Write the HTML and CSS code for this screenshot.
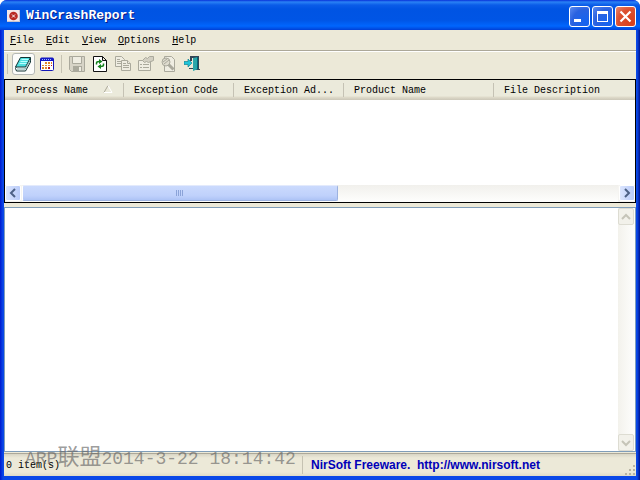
FILE: index.html
```
<!DOCTYPE html>
<html lang="en">
<head>
<meta charset="utf-8">
<title>WinCrashReport</title>
<link rel="stylesheet" href="styles.css">
</head>
<body>
<div class="window">
  <header class="titlebar">
    <svg class="app-icon" width="13" height="12" viewBox="0 0 13 12"><path fill="#f4e8e8" d="M0 0h13v12H0z"/><path fill="#c8c4d0" d="M0 11h13v1H0zM12 0h1v12h-1z"/><circle cx="6.500" cy="6" r="4.300" fill="#b82a24"/><path d="M5 4.500l3 3M8 4.500l-3 3" stroke="#fff"/></svg>
    <h1 class="title">WinCrashReport</h1>
    <div class="caption">
      <button class="cap" aria-label="Minimize"><svg width="19" height="19" viewBox="0 0 19 19"><path fill="#fff" d="M4 12h7v3H4z"/></svg></button>
      <button class="cap" aria-label="Maximize"><svg width="19" height="19" viewBox="0 0 19 19"><path fill="#fff" fill-rule="evenodd" d="M4 4h11v11H4zM5 7v7h9V7z"/></svg></button>
      <button class="cap cap-close" aria-label="Close"><svg width="19" height="19" viewBox="0 0 19 19"><path stroke="#fff" stroke-width="2.200" d="M4.500 4.500l10 10M14.500 4.500l-10 10"/></svg></button>
    </div>
  </header>
  <div class="client">
    <nav class="menu">
      <button><u>F</u>ile</button><button><u>E</u>dit</button><button><u>V</u>iew</button><button><u>O</u>ptions</button><button><u>H</u>elp</button>
    </nav>
    <div class="toolbar">
      <span class="grip"></span>
      <button class="tool active" aria-label="Lower pane"><svg width="17" height="16" viewBox="0 0 17 16"><path fill="#fff" stroke="#133" d="M1.500 10.500l-1 2 1 2.500h9l5-9V2z"/><path fill="#4fdfe0" stroke="#133" d="M5.500 1.500h10l-5 9.500h-10z"/><path stroke="#b8ffff" d="M6.500 3.500h7M5.500 5.500h7M4.500 7.500h7"/><path fill="none" stroke="#7aa" d="M2 13h8l5-8.500"/></svg></button>
      <button class="tool" aria-label="Calendar"><svg width="14" height="14" viewBox="0 0 14 14"><rect x=".5" y="1" width="13" height="12.500" rx="1" fill="#fff" stroke="#1418b8"/><path fill="#1418c8" d="M1 1h12v3H1z"/><path stroke="#9db8ff" d="M2 2.500h10" stroke-dasharray="1 1"/><path fill="#e0862a" d="M5 5h2v2H5zM8 5h2v2H8zM11 5h1v2h-1zM2 8h2v1H2zM5 8h2v1H5zM8 8h2v1H8zM2 10h2v2H2zM5 10h2v2H5z"/><path fill="#c01818" d="M11 8h1v1h-1zM8 10h2v2H8z"/></svg></button>
      <span class="divider"></span>
      <button class="tool" aria-label="Save" disabled><svg width="16" height="16" viewBox="0 0 16 16"><path fill="#d7d4c7" stroke="#aaa99c" d="M.5.500h15v15h-13l-2-2z"/><path fill="#efede2" stroke="#aaa99c" d="M3.500.500h9v7h-9z"/><path fill="#aaa99c" d="M4 10h9v5H4z"/><path fill="#efede2" d="M10 11h2v4h-2z"/></svg></button>
      <button class="tool" aria-label="Refresh"><svg width="14" height="16" viewBox="0 0 14 16"><path fill="#fff" stroke="#111" d="M.5.500h9l4 4v11H.5zM9.500.500v4h4"/><path fill="none" stroke="#15821c" stroke-width="1.500" d="M3.500 8.500V7q0-1.500 3-1.500M10.500 7.500V9q0 1.500-3 1.500"/><path fill="#15821c" d="M6 3l3.500 2.500L6 8zM8 8l-3.500 2.500L8 13z"/></svg></button>
      <button class="tool" aria-label="Copy" disabled><svg width="16" height="15" viewBox="0 0 16 15"><g fill="#efede2" stroke="#aaa99c"><path d="M.5.500h6l3 3v7h-9z"/><path d="M6.500 4.500h6l3 3v7h-9z"/><path d="M2 3.500h3M2 5.500h4M2 7.500h4M8 7.500h3M8 9.500h6M8 11.500h6M12.500 4.500v3h3"/></g></svg></button>
      <button class="tool" aria-label="Properties" disabled><svg width="16" height="15" viewBox="0 0 16 15"><g fill="#efede2" stroke="#aaa99c"><path d="M.5 4.500h12v10H.5z"/><path d="M2 8.500h2M5 8.500h6M2 11.500h2M5 11.500h6"/><path fill="#d2cfc2" d="M4.500 4.500l3-3 2 1 2-2h4v4l-5 2-2-1-2 1z"/></g></svg></button>
      <button class="tool" aria-label="Find" disabled><svg width="15" height="16" viewBox="0 0 15 16"><g fill="#efede2" stroke="#aaa99c"><path d="M3.500.500h7l3 3v12h-10z"/><circle cx="5" cy="6" r="4" fill="#dedbce"/><path stroke-width="3" d="M7.500 8.500l5 5"/><path d="M2 6l4-3M3 8l5-4"/></g></svg></button>
      <button class="tool" aria-label="Exit"><svg width="16" height="15" viewBox="0 0 16 15"><path fill="#345" d="M6 0h9v13h1v1h-5V2H8v3H6zM5 12h5v1H5z"/><path fill="#2aa6aa" d="M9 2l5-1v12l-5 2z"/><path fill="#067" d="M13 1h1v12h-1z"/><path fill="#20c4d8" stroke="#078" stroke-width=".6" d="M0 5.500h4V3l4 4-4 4V8.500H0z"/></svg></button>
    </div>
    <section class="list">
      <table>
        <colgroup><col class="c1"><col class="c2"><col class="c2"><col class="c3"><col></colgroup>
        <thead><tr>
          <th>Process Name<svg class="sort" width="10" height="8" viewBox="0 0 10 8"><path fill="none" stroke="#aca899" d="M5 .5L1 7.500"/><path fill="none" stroke="#fff" d="M5 .5l4 7H1"/></svg></th><th>Exception Code</th><th>Exception Ad...</th><th>Product Name</th><th>File Description</th>
        </tr></thead>
      </table>
      <div class="hscroll">
        <button class="arrow" aria-label="Scroll left"><svg width="8" height="10" viewBox="0 0 8 10"><path fill="none" stroke="#4d6185" stroke-width="2" d="M6 1L2 5l4 4"/></svg></button>
        <div class="track"><div class="thumb"><i></i><i></i><i></i><i></i></div></div>
        <button class="arrow" aria-label="Scroll right"><svg width="8" height="10" viewBox="0 0 8 10"><path fill="none" stroke="#4d6185" stroke-width="2" d="M2 1l4 4-4 4"/></svg></button>
      </div>
    </section>
    <section class="report">
      <textarea aria-label="Crash report" readonly></textarea>
      <div class="vscroll">
        <button class="arrow off" aria-label="Scroll up" disabled><svg width="10" height="8" viewBox="0 0 10 8"><path fill="none" stroke="#c5c4b8" stroke-width="2" d="M1 6l4-4 4 4"/></svg></button>
        <button class="arrow off" aria-label="Scroll down" disabled><svg width="10" height="8" viewBox="0 0 10 8"><path fill="none" stroke="#c5c4b8" stroke-width="2" d="M1 2l4 4 4-4"/></svg></button>
      </div>
    </section>
    <footer class="status">
      <span class="count">0 item(s)</span>
      <a class="link" href="#">NirSoft Freeware.&nbsp; http://www.nirsoft.net</a>
      <svg class="resize" width="12" height="12" viewBox="0 0 12 12"><path fill="#b8b4a3" d="M9 1h2v2H9zM9 5h2v2H9zM5 5h2v2H5zM1 9h2v2H1zM5 9h2v2H5zM9 9h2v2H9z"/></svg>
      <div class="stamp">ARP<span class="han" lang="zh">联盟</span>2014-3-22 18:14:42</div>
    </footer>
  </div>
</div>
</body>
</html>
```
FILE: styles.css
```
* { box-sizing: border-box; }
body {
  margin: 0;
  background: #fff;
  color: #000;
  font: 10px/12px "Liberation Mono", "Noto Sans CJK SC", monospace;
}
button {
  margin: 0;
  padding: 0;
  border: 0;
  background: none;
  color: inherit;
  font: inherit;
}
svg { display: block; }
.window {
  display: flex;
  flex-direction: column;
  min-height: 100vh;
  padding: 0 4px 4px;
  border-radius: 7px 7px 0 0;
  background: linear-gradient(90deg, #0019cf, #0a48e8 3px, #0a48e8 calc(100% - 3px), #00138c);
}
.titlebar {
  display: flex;
  align-items: center;
  height: 30px;
  margin: 0 -4px;
  padding: 2px 4px 0 7px;
  border-radius: 7px 7px 0 0;
  background: linear-gradient(#0831d9 0, #2a82f5 2px, #0a5ce8 5px, #0054e3 9px, #0055e5 20px, #0066fe 26px, #004be0 29px, #003dd7);
}
.title {
  flex: 1;
  margin: 0 0 0 6px;
  color: #fff;
  font-size: 13px;
  line-height: 16px;
  text-shadow: 1px 1px #0a1883;
}
.caption { display: flex; gap: 2px; }
.cap {
  width: 21px;
  height: 21px;
  border: 1px solid #fff;
  border-radius: 3px;
  background: radial-gradient(circle at 80% 80%, #1463f0, #2a62e0 60%, #5e8cf0);
}
.cap-close { background: radial-gradient(circle at 80% 80%, #d8401c, #dc5030 60%, #ea8a70); }
.client {
  display: flex;
  flex: 1;
  flex-direction: column;
  background: #ece9d8;
}
.menu {
  display: flex;
  height: 21px;
  padding-top: 2px;
  border-bottom: 1px solid #aca899;
}
.menu button { padding: 0 6px; }
.toolbar {
  display: flex;
  align-items: center;
  height: 28px;
  padding: 0 3px 4px;
  border-top: 1px solid #fff;
}
.grip {
  width: 1px;
  height: 20px;
  margin-right: 4px;
  background: #c5c2b2;
}
.divider {
  width: 1px;
  height: 18px;
  margin: 0 3px;
  background: #c5c2b2;
}
.tool {
  display: grid;
  place-items: center;
  width: 23px;
  height: 22px;
}
.active {
  border: 1px solid #b5b8b5;
  border-radius: 3px;
  background: #fcfcfa;
}
.list {
  display: flex;
  flex-direction: column;
  height: 124px;
  border: 1px solid #000;
  background: #fff;
}
table {
  width: 100%;
  table-layout: fixed;
  border-collapse: collapse;
}
.c1 { width: 119px; }
.c2 { width: 110px; }
.c3 { width: 150px; }
th {
  height: 20px;
  padding: 2px 0 0 10px;
  background: linear-gradient(#c5c2b4, #c5c2b4) right 0 top 3px / 1px 14px no-repeat, linear-gradient(#ebeadb 16px, #e0dccb 17px, #cbc7b8);
  font-weight: normal;
  text-align: left;
  white-space: nowrap;
}
th:first-child { padding-left: 11px; }
th:last-child { background: linear-gradient(#ebeadb 16px, #e0dccb 17px, #cbc7b8); }
.sort { display: inline-block; margin-left: 15px; }
.hscroll {
  display: flex;
  gap: 1px;
  height: 17px;
  margin-top: auto;
  background: #f5f4f1;
}
.arrow {
  display: grid;
  flex: none;
  place-items: center;
  width: 16px;
  height: 16px;
  border: 1px solid #fff;
  border-radius: 2px;
  background: linear-gradient(90deg, #dbe5fe, #b9cbf9);
}
.track { flex: 1; background: linear-gradient(#f1f0ec, #fefefd); }
.thumb {
  display: flex;
  align-items: center;
  justify-content: center;
  gap: 1px;
  width: 53%;
  height: 16px;
  border: 1px solid #9cb2e0;
  border-top-color: #e3eafc;
  border-left-color: #fff;
  border-radius: 2px;
  background: linear-gradient(#cbdafd, #bfd1fb 70%, #adc3f5);
}
.thumb i {
  width: 1px;
  height: 6px;
  background: #8ba3d8;
}
.report {
  display: flex;
  flex: 1;
  margin-top: 4px;
  border: 1px solid #7f9db9;
  background: #fff;
}
textarea {
  flex: 1;
  border: 0;
  outline: 0;
  background: #fff;
  font: inherit;
  resize: none;
}
.vscroll {
  display: flex;
  flex-direction: column;
  justify-content: space-between;
  width: 17px;
  background: linear-gradient(90deg, #f3f2ec, #fefefd);
}
.off {
  height: 17px;
  border-color: #dddcd2;
  background: #f2f1ea;
}
.status {
  position: relative;
  display: flex;
  align-items: center;
  height: 23px;
  margin-top: 1px;
  border-top: 1px solid #aca899;
  background: linear-gradient(#d8d5c5, #ece9d8 4px, #ece9d8 18px, #dfdbc8);
}
.count {
  width: 299px;
  padding: 2px 0 0 2px;
  border-right: 1px solid #c5c2b2;
}
.count, .link { line-height: 16px; }
.link {
  flex: 1;
  padding-left: 8px;
  color: #0000b8;
  font-family: "Liberation Sans", Arial, sans-serif;
  font-size: 12px;
  font-weight: bold;
  text-decoration: none;
}
.resize { align-self: flex-end; }
.stamp {
  position: absolute;
  bottom: 5px;
  left: 21px;
  color: rgba(100, 100, 100, .65);
  font-size: 18px;
  line-height: 24px;
  white-space: nowrap;
  pointer-events: none;
}
.han { font-size: 22px; }
```
